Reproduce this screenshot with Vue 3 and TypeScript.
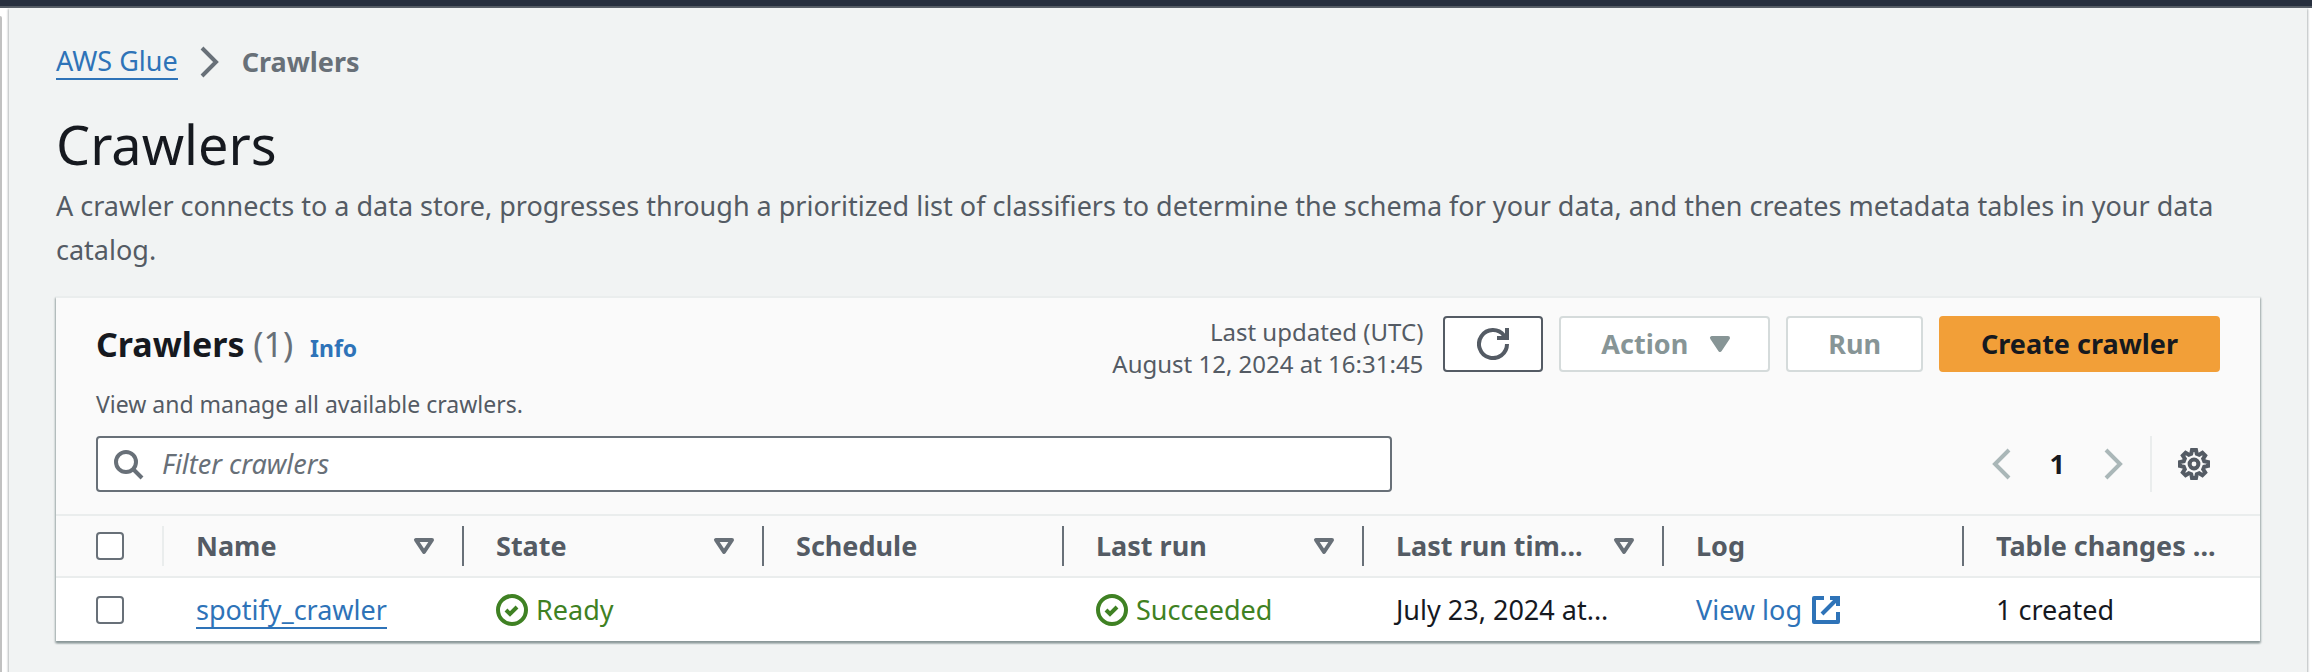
<script setup lang="ts">
import { ref } from 'vue'

interface Column {
  key: string
  label: string
  sortable: boolean
}

const columns: Column[] = [
  { key: 'name', label: 'Name', sortable: true },
  { key: 'state', label: 'State', sortable: true },
  { key: 'schedule', label: 'Schedule', sortable: false },
  { key: 'lastRun', label: 'Last run', sortable: true },
  { key: 'lastRunTime', label: 'Last run tim...', sortable: true },
  { key: 'log', label: 'Log', sortable: false },
  { key: 'changes', label: 'Table changes ...', sortable: false },
]

const filter = ref('')
const allSelected = ref(false)
const rowSelected = ref(false)
</script>

<template>
  <div class="shell">
    <div class="topbar"></div>
    <div class="frame">
      <div class="nav-edge"><div class="nav-scroll"></div></div>
      <main class="main">
        <nav class="breadcrumbs" aria-label="Breadcrumbs">
          <a class="link underlined" href="#">AWS Glue</a>
          <svg class="icon muted" viewBox="0 0 16 16" aria-hidden="true"><path d="m4 1 7 7-7 7" /></svg>
          <span class="current">Crawlers</span>
        </nav>

        <h1>Crawlers</h1>
        <p class="intro">
          A crawler connects to a data store, progresses through a prioritized list of classifiers to determine the
          schema for your data, and then creates metadata tables in your data catalog.
        </p>

        <section class="panel">
          <header class="panel-head">
            <div class="head-row">
              <div class="titles">
                <h2>Crawlers <span class="count">(1)</span> <a class="info" href="#">Info</a></h2>
                <p class="sub">View and manage all available crawlers.</p>
              </div>
              <div class="actions">
                <div class="updated">Last updated (UTC)<br />August 12, 2024 at 16:31:45</div>
                <button class="btn refresh" type="button" aria-label="Refresh">
                  <svg class="icon" viewBox="0 0 16 16" aria-hidden="true">
                    <path d="M10 5h5V0" />
                    <path d="M15 8a7 7 0 1 1-1.5-4.3L15 5" />
                  </svg>
                </button>
                <button class="btn dropdown" type="button" disabled>
                  Action
                  <svg class="icon solid" viewBox="0 0 16 16" aria-hidden="true"><path d="M4 5h8l-4 6-4-6z" /></svg>
                </button>
                <button class="btn" type="button" disabled>Run</button>
                <button class="btn primary" type="button">Create crawler</button>
              </div>
            </div>
            <div class="tools">
              <label class="search">
                <svg class="icon muted" viewBox="0 0 16 16" aria-hidden="true">
                  <circle cx="7" cy="7" r="5" />
                  <path d="m15 15-4.500-4.500" />
                </svg>
                <input v-model="filter" type="text" placeholder="Filter crawlers" aria-label="Filter crawlers" />
              </label>
              <div class="pager">
                <button class="bare" type="button" aria-label="Previous page" disabled>
                  <svg class="icon" viewBox="0 0 16 16" aria-hidden="true"><path d="m12 1-7 7 7 7" /></svg>
                </button>
                <button class="bare page" type="button">1</button>
                <button class="bare" type="button" aria-label="Next page" disabled>
                  <svg class="icon" viewBox="0 0 16 16" aria-hidden="true"><path d="m4 1 7 7-7 7" /></svg>
                </button>
                <div class="prefs">
                  <button class="bare" type="button" aria-label="Preferences">
                    <svg class="icon" viewBox="0 0 16 16" aria-hidden="true">
                      <path
                        d="M7 1h2l.4 1.900 1.200.500 1.600-1 1.400 1.400-1 1.600.500 1.200L15 7v2l-1.900.400-.500 1.200 1 1.600-1.400 1.400-1.600-1-1.200.500L9 15H7l-.400-1.900-1.200-.500-1.600 1-1.400-1.400 1-1.600-.500-1.200L1 9V7l1.900-.400.500-1.200-1-1.600 1.400-1.400 1.600 1 1.200-.500z"
                      />
                      <circle cx="8" cy="8" r="2.200" />
                    </svg>
                  </button>
                </div>
              </div>
            </div>
          </header>

          <table>
            <thead>
              <tr>
                <th class="pick"><input v-model="allSelected" type="checkbox" aria-label="Select all crawlers" /></th>
                <th v-for="col in columns" :key="col.key" scope="col">
                  <div class="th">
                    <span>{{ col.label }}</span>
                    <svg v-if="col.sortable" class="icon sort" viewBox="0 0 16 16" aria-hidden="true">
                      <path d="M4 5h8l-4 6-4-6z" />
                    </svg>
                  </div>
                </th>
              </tr>
            </thead>
            <tbody>
              <tr>
                <td class="pick"><input v-model="rowSelected" type="checkbox" aria-label="Select spotify_crawler" /></td>
                <td><a class="link underlined" href="#">spotify_crawler</a></td>
                <td>
                  <span class="status">
                    <svg class="icon" viewBox="0 0 16 16" aria-hidden="true"><circle cx="8" cy="8" r="7" /><path d="m5 8 2 2 3.500-3.500" /></svg>
                    Ready
                  </span>
                </td>
                <td></td>
                <td>
                  <span class="status">
                    <svg class="icon" viewBox="0 0 16 16" aria-hidden="true"><circle cx="8" cy="8" r="7" /><path d="m5 8 2 2 3.500-3.500" /></svg>
                    Succeeded
                  </span>
                </td>
                <td>July 23, 2024 at...</td>
                <td>
                  <a class="link external" href="#">
                    View log
                    <svg class="icon" viewBox="0 0 16 16" aria-hidden="true">
                      <path d="M10 2h4v4" />
                      <path d="m6 10 8-8" />
                      <path d="M14 9v5H2V2h5" stroke-linejoin="round" />
                    </svg>
                  </a>
                </td>
                <td>1 created</td>
              </tr>
            </tbody>
          </table>
        </section>
      </main>
      <div class="tools-edge"></div>
    </div>
  </div>
</template>

<style>
body {
  margin: 0;
  background: #f1f3f3;
}
</style>

<style scoped>
* {
  box-sizing: border-box;
}

.shell {
  display: flex;
  flex-direction: column;
  min-height: 100vh;
  font-family: 'Noto Sans', sans-serif;
  font-size: 27px;
  line-height: 44px;
  color: #16191f;
}

.topbar {
  height: 8px;
  background: #272f3e;
  border-bottom: 2px solid #545b64;
}

.frame {
  flex: 1;
  display: grid;
  grid-template-columns: 9px 1fr 5px;
  background: #fff;
}

.nav-edge {
  display: flex;
  padding-top: 8px;
}

.nav-scroll {
  width: 2px;
  background: #c1c1c1;
  border-top-right-radius: 2px;
}

.main {
  padding: 32px 47px 0;
  background: #f1f3f3;
  box-shadow: 0 2px 2px 1px #b4b9bb;
}

.icon {
  flex: none;
  width: 32px;
  height: 32px;
  fill: none;
  stroke: currentColor;
  stroke-width: 2;
}

.muted {
  color: #687078;
}

.link {
  color: #2e73b8;
  text-decoration: none;
}

.underlined {
  display: inline-block;
  line-height: 34px;
  border-bottom: 2px solid #2e73b8;
}

.breadcrumbs {
  display: flex;
  align-items: center;
  gap: 16px;
  height: 44px;
}

.current {
  font-weight: 700;
  color: #687078;
}

h1 {
  margin: 24px 0 0;
  font-size: 54px;
  font-weight: 400;
  line-height: 72px;
}

.intro {
  margin: 4px 0 24px;
  color: #545b64;
}

.panel {
  background: #fff;
  box-shadow: 0 2px 2px #879596, 1px 2px 2px #b9c0c1, -1px 2px 2px #b9c0c1;
  border-top: 2px solid #eaeded;
}

.panel-head {
  padding: 18px 40px 22px;
  background: #fafafa;
  border-bottom: 2px solid #eaeded;
}

.head-row {
  display: flex;
  justify-content: space-between;
}

h2 {
  margin: 4px 0 0;
  font-size: 34px;
  font-weight: 700;
  line-height: 48px;
}

.count {
  font-weight: 400;
  line-height: 32px;
  color: #687078;
}

.info {
  margin-left: 8px;
  font-size: 23px;
  line-height: 32px;
  color: #2e73b8;
  text-decoration: none;
}

.sub {
  margin: 20px 0 16px;
  font-size: 23px;
  line-height: 32px;
  color: #545b64;
}

.actions {
  display: flex;
  align-items: flex-start;
  gap: 16px;
}

.updated {
  margin-right: 4px;
  font-size: 24px;
  line-height: 32px;
  text-align: right;
  color: #545b64;
}

.btn {
  display: flex;
  align-items: center;
  gap: 16px;
  height: 56px;
  padding: 0 40px;
  font: inherit;
  font-weight: 700;
  color: #545b64;
  background: #fff;
  border: 2px solid #545b64;
  border-radius: 4px;
}

.btn:disabled {
  color: #879596;
  border-color: #d5dbdb;
}

.refresh {
  padding: 0 32px;
}

.dropdown {
  padding-right: 32px;
}

.primary {
  color: #16191f;
  background: #f29f38;
  border-color: #f29f38;
}

.solid {
  fill: currentColor;
  stroke-linejoin: round;
}

.tools {
  display: flex;
  justify-content: space-between;
  align-items: center;
}

.search {
  display: flex;
  align-items: center;
  gap: 18px;
  width: 61%;
  height: 56px;
  padding: 0 14px;
  background: #fff;
  border: 2px solid #687078;
  border-radius: 4px;
}

.search input {
  flex: 1;
  padding: 0;
  font: inherit;
  background: none;
  border: 0;
  outline: 0;
}

.search input::placeholder {
  font-style: italic;
  color: #687078;
  opacity: 1;
}

.pager {
  display: flex;
  align-items: center;
  height: 56px;
}

.bare {
  display: flex;
  justify-content: center;
  padding: 0 10px;
  font: inherit;
  color: #545b64;
  background: none;
  border: 0;
}

.bare:disabled {
  color: #aab7b8;
}

.page {
  padding: 0 23px;
  font-weight: 700;
  color: #16191f;
}

.prefs {
  display: flex;
  align-items: center;
  height: 56px;
  padding-left: 16px;
  margin-left: 10px;
  border-left: 2px solid #eaeded;
}

table {
  width: 100%;
  table-layout: fixed;
  border-collapse: collapse;
}

th,
td {
  padding: 0 0 0 32px;
  text-align: left;
  white-space: nowrap;
}

th {
  height: 61px;
  background: #fafafa;
  border-bottom: 2px solid #eaeded;
  color: #545b64;
}

th:last-child {
  width: 296px;
}

td {
  height: 64px;
}

.pick {
  width: 108px;
  padding-left: 40px;
}

.pick input {
  display: block;
  appearance: none;
  width: 28px;
  height: 28px;
  margin: 0;
  background: #fff;
  border: 2px solid #687078;
  border-radius: 4px;
}

.th {
  display: flex;
  justify-content: space-between;
  align-items: center;
  padding-right: 24px;
  position: relative;
}

th:last-child .th {
  padding-right: 0;
}

.th::before {
  content: '';
  position: absolute;
  left: -34px;
  top: 2px;
  width: 2px;
  height: 40px;
  background: #687078;
}

.pick + th .th::before {
  background: #eaeded;
}

.sort {
  color: #687078;
  stroke-linejoin: round;
}

.status,
.external {
  display: flex;
  align-items: center;
  gap: 8px;
}

.status {
  color: #3f8123;
}
</style>
